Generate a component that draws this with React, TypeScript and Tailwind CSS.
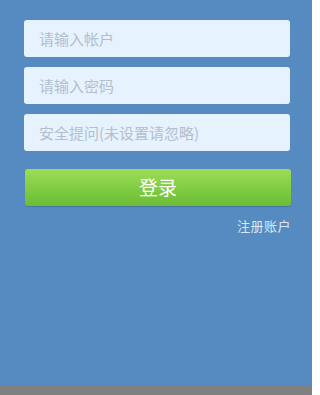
import { useState } from 'react';

const font = { fontFamily: '"Microsoft YaHei", "Noto Sans CJK SC", sans-serif' };

const fields = [
  { name: 'account', placeholder: '请输入帐户', type: 'text' },
  { name: 'password', placeholder: '请输入密码', type: 'password' },
  { name: 'question', placeholder: '安全提问(未设置请忽略)', type: 'text' },
];

export default function App() {
  const [values, setValues] = useState<Record<string, string>>({});

  return (
    <div className="flex h-[395px] w-[312px] flex-col" style={font}>
      <div className="flex flex-1 flex-col bg-[#568bc1] px-[24px] pt-[20px]">
        <div className="flex flex-col gap-[10px]">
          {fields.map((f) => (
            <input
              key={f.name}
              type={f.type}
              placeholder={f.placeholder}
              value={values[f.name] ?? ''}
              onChange={(e) => setValues({ ...values, [f.name]: e.target.value })}
              className="h-[37px] w-[266px] rounded-[3px] bg-[#e6f2fd] px-[15px] text-[15px] text-gray-700 outline-none placeholder:text-[#b3bfcd]"
            />
          ))}
        </div>
        <button className="mt-[18px] ml-[1px] h-[37px] w-[266px] rounded-[3px] bg-gradient-to-b from-[#9ade55] to-[#6bbc35] text-[19px] text-white shadow-[0_1px_1px_rgba(0,0,0,0.15)]">
          登录
        </button>
        <div className="mt-[11px] -mr-[3px] flex justify-end">
          <a className="text-[13px] leading-[18px] tracking-[0.5px] text-[#dde7f2]">注册账户</a>
        </div>
      </div>
      <div className="h-[10px] bg-[#808080]" />
    </div>
  );
}
